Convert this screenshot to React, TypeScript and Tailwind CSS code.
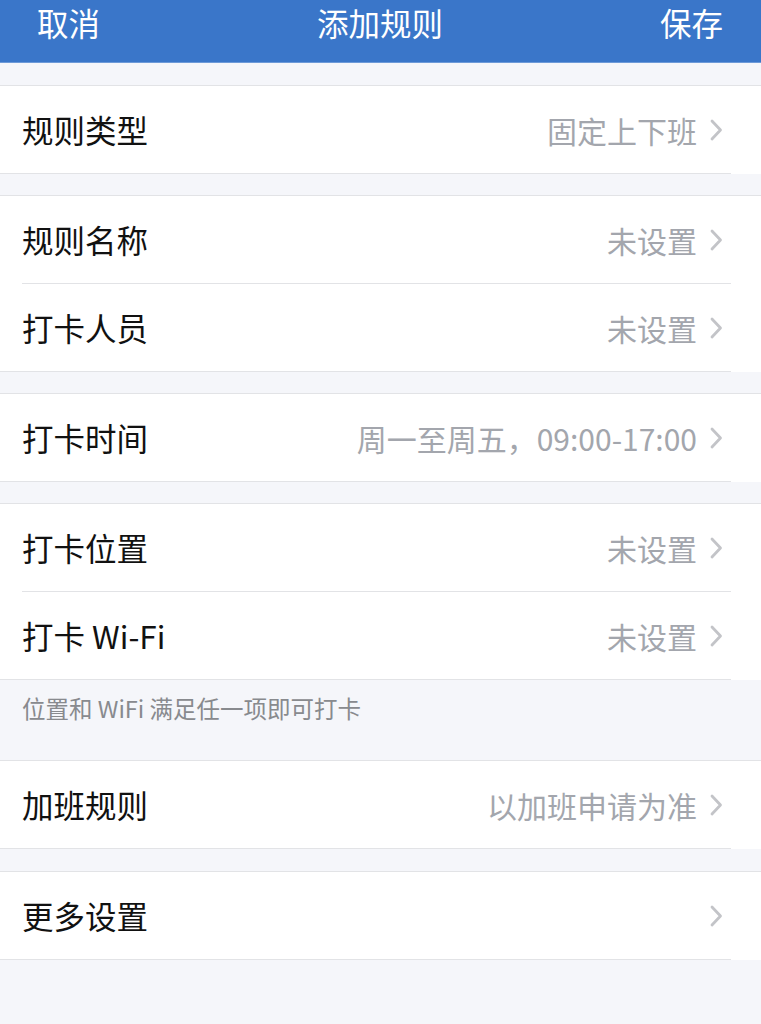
const font = { fontFamily: '"Noto Sans CJK SC", "Noto Sans", sans-serif' };

const Chevron = () => (
   <svg width="14" height="22" viewBox="0 0 14 22" fill="none" className="shrink-0">
      <path d="M3 2 L11.5 11 L3 20" stroke="#c3c4c8" strokeWidth="2.8" strokeLinecap="round" strokeLinejoin="round" />
   </svg>
);

type Row = { label: string; value?: string };

const Group = ({ rows }: { rows: Row[] }) => {
   return (
      <div className="bg-white border-t border-[#e2e3e6]">
         {rows.map((row, i) => (
            <div key={row.label}>
               <div className="h-[87px] flex items-center pl-[22px] pr-[38px]">
                  <span className="flex-grow text-[31.5px] text-[#111] leading-none">{row.label}</span>
                  {row.value && <span className="text-[30px] text-[#a3a6ad] leading-none mr-[12px]">{row.value}</span>}
                  <Chevron />
               </div>
               {i < rows.length - 1 ? (
                  <div className="h-px bg-[#e2e3e6] ml-[22px] mr-[30px]" />
               ) : (
                  <div className="h-px bg-[#e2e3e6] mr-[30px]" />
               )}
            </div>
         ))}
      </div>
   );
};

const App = () => {
   return (
      <div className="w-[761px] h-[1024px] bg-[#f5f6fa] overflow-hidden" style={font}>
         <div className="h-[63px] bg-[#3a76c9] border-b border-[#6d9ad8]">
            <div className="flex items-center justify-between h-[46px] pl-[37px] pr-[38px] text-white text-[31.5px] leading-none">
               <span>取消</span>
               <span>添加规则</span>
               <span>保存</span>
            </div>
         </div>
         <div className="h-[22px]" />
         <Group rows={[{ label: '规则类型', value: '固定上下班' }]} />
         <div className="h-[21px]" />
         <Group rows={[{ label: '规则名称', value: '未设置' }, { label: '打卡人员', value: '未设置' }]} />
         <div className="h-[21px]" />
         <Group rows={[{ label: '打卡时间', value: '周一至周五，09:00-17:00' }]} />
         <div className="h-[21px]" />
         <Group rows={[{ label: '打卡位置', value: '未设置' }, { label: '打卡 Wi-Fi', value: '未设置' }]} />
         <div className="h-[80px] pl-[22px] pt-[17px] text-[23.5px] text-[#888a8e] leading-none">位置和 WiFi 满足任一项即可打卡</div>
         <Group rows={[{ label: '加班规则', value: '以加班申请为准' }]} />
         <div className="h-[22px]" />
         <Group rows={[{ label: '更多设置' }]} />
      </div>
   );
};

export default App;
